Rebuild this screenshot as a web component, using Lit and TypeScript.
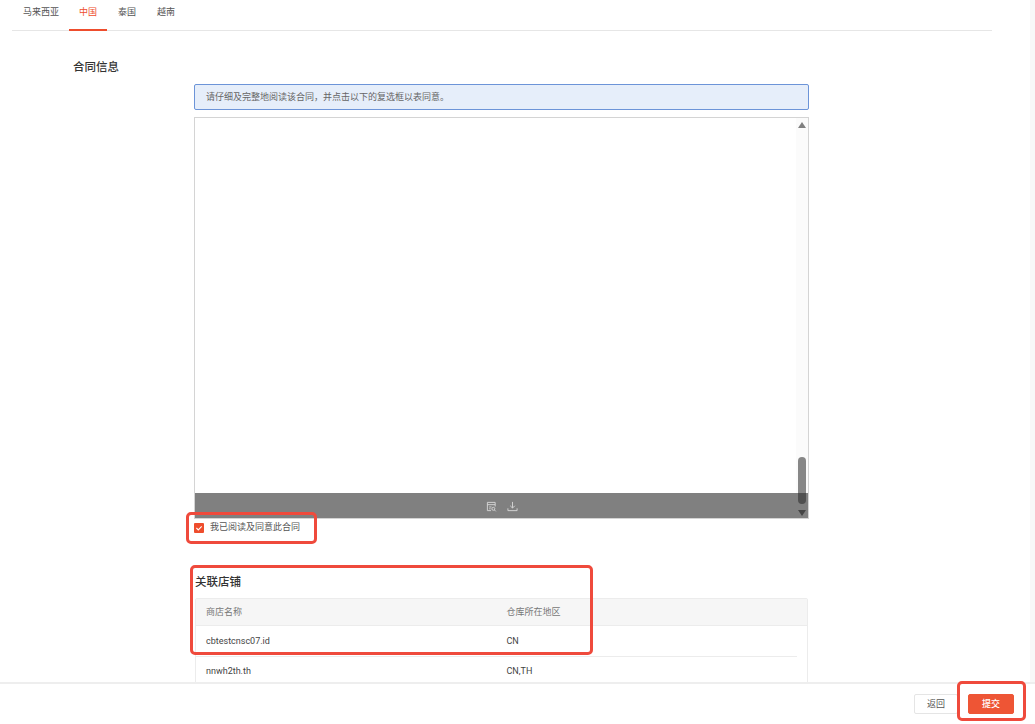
import { LitElement, html, css } from "lit";
import { customElement } from "lit/decorators.js";

@customElement("app-root")
export class AppRoot extends LitElement {
  static styles = css`
    :host { display: block; font-family: "Roboto", "Noto Sans CJK SC", "Liberation Sans", sans-serif; color: #444; }
    * { box-sizing: border-box; }
    .page { position: relative; width: 1035px; height: 724px; overflow: hidden; background: #fff; display: flex; flex-direction: column; }
    .main { flex: 1; min-height: 0; overflow: hidden; padding: 0 43px 0 12px; }
    .tabs { display: flex; height: 31px; border-bottom: 1px solid #e6e6e6; padding-left: 1px; font-size: 9px; color: #555; }
    .tab { padding: 0 10px; height: 31px; line-height: 25px; margin-right: 1px; }
    .tab:first-child { margin-right: 0; }
    .tab.active { color: #ee4d2d; border-bottom: 2px solid #ee4d2d; }
    .section-title { margin: 28px 0 0 61px; font-size: 11.5px; line-height: 16px; font-weight: 500; color: #333; }
    .content { margin: 9px 0 0 182px; width: 615px; }
    .alert { height: 26px; background: #e6eefa; border: 1px solid #6c94d8; border-radius: 2px; padding-left: 11px; font-size: 9px; line-height: 24px; color: #666; }
    .viewer { position: relative; margin-top: 7px; height: 402px; border: 1px solid #d4d4d4; display: flex; flex-direction: column; background: #fff; }
    .doc { flex: 1; }
    .bar { height: 25px; background: #808080; display: flex; align-items: center; justify-content: center; gap: 10px; padding-top: 2px; }
    .bar svg { width: 11px; height: 11px; display: block; }
    .scroll { position: absolute; top: 0; right: 0; bottom: 0; width: 12px; background: linear-gradient(#fbfbfb calc(100% - 25px), transparent 0); }
    .up, .down { position: absolute; left: 2px; width: 0; height: 0; border-left: 4px solid transparent; border-right: 4px solid transparent; }
    .up { top: 4px; border-bottom: 6px solid #808080; }
    .down { bottom: 2px; border-top: 6px solid #444; }
    .thumb { position: absolute; left: 2px; top: 339px; width: 8px; height: 47px; border-radius: 4px; background: rgba(40,40,40,.55); }
    .agree { display: flex; align-items: center; gap: 6px; margin-top: 4px; height: 10px; font-size: 9px; line-height: 9px; color: #555; }
    .check { width: 10px; height: 10px; background: #ee4d2d; border-radius: 1px; display: block; flex: none; }
    .agree span { margin-top: -1px; }
    .sub-title { margin: 41px 0 0 1px; font-size: 11.5px; line-height: 16px; font-weight: 500; color: #333; }
    .table { margin: 8px 0 0 1px; width: 613px; border: 1px solid #ececec; border-radius: 2px; }
    .row { display: grid; grid-template-columns: 300.5px 1fr; padding: 0 10px; font-size: 9px; }
    .head { height: 27px; line-height: 27px; background: #f6f6f6; border-bottom: 1px solid #ececec; color: #777; }
    .cell-row { height: 31px; line-height: 29px; color: #444; }
    .cell-row.line { border-bottom: 1px solid #ececec; line-height: 30px; margin-right: 10px; padding-right: 0; }
    .footer { flex: none; height: 42px; background: #fff; border-top: 2px solid #eee; display: flex; justify-content: flex-end; align-items: flex-start; gap: 10px; padding: 10px 21px 0 0; }
    .btn { width: 44px; height: 20px; font-size: 9px; line-height: 18px; text-align: center; border-radius: 2px; border: 1px solid #e5e5e5; background: #fff; color: #555; }
    .btn.primary { width: 46px; background: #ee5535; border-color: #ee5535; color: #fff; font-weight: 500; }
    .gutter { position: absolute; top: 0; right: 0; bottom: 42px; width: 5px; background: #f8f8f8; }
    .mark { position: absolute; border: 3px solid #ef4a3c; border-radius: 5px; pointer-events: none; }
    .m1 { left: 186px; top: 512px; width: 131px; height: 32px; }
    .m2 { left: 190px; top: 565px; width: 403px; height: 90px; }
    .m3 { left: 957px; top: 681px; width: 69px; height: 40px; }
  `;

  render() {
    return html`
      <div class="page">
        <div class="main">
          <div class="tabs">
            <div class="tab">马来西亚</div>
            <div class="tab active">中国</div>
            <div class="tab">泰国</div>
            <div class="tab">越南</div>
          </div>
          <div class="section-title">合同信息</div>
          <div class="content">
            <div class="alert">请仔细及完整地阅读该合同，并点击以下的复选框以表同意。</div>
            <div class="viewer">
              <div class="doc"></div>
              <div class="bar">
                <svg viewBox="0 0 12 12" fill="none" stroke="#d8d8d8" stroke-width="1">
                  <path d="M5.5 10.5H1.5v-9h8.5V6M1.5 4h8.5M3.5 6.5h2.5M3.5 8.5h1.5" />
                  <circle cx="8" cy="8.5" r="1.6" />
                  <path d="M9.2 9.8l1.5 1.5" />
                </svg>
                <svg viewBox="0 0 12 12" fill="none" stroke="#d8d8d8" stroke-width="1">
                  <path d="M6 1v6.5M3.5 5.2L6 7.7l2.5-2.5" />
                  <path d="M1 8v2.5h10V8" />
                </svg>
              </div>
              <div class="scroll">
                <div class="up"></div>
                <div class="thumb"></div>
                <div class="down"></div>
              </div>
            </div>
            <div class="agree">
              <svg class="check" viewBox="0 0 10 10" fill="none" stroke="#fff" stroke-width="1.1">
                <path d="M2.4 5l1.9 1.9 3.4-3.6" />
              </svg>
              <span>我已阅读及同意此合同</span>
            </div>
            <div class="sub-title">关联店铺</div>
            <div class="table">
              <div class="row head"><span>商店名称</span><span>仓库所在地区</span></div>
              <div class="row cell-row line"><span>cbtestcnsc07.id</span><span>CN</span></div>
              <div class="row cell-row"><span>nnwh2th.th</span><span>CN,TH</span></div>
            </div>
          </div>
        </div>
        <div class="footer">
          <div class="btn">返回</div>
          <div class="btn primary">提交</div>
        </div>
        <div class="gutter"></div>
        <div class="mark m1"></div>
        <div class="mark m2"></div>
        <div class="mark m3"></div>
      </div>
    `;
  }
}
